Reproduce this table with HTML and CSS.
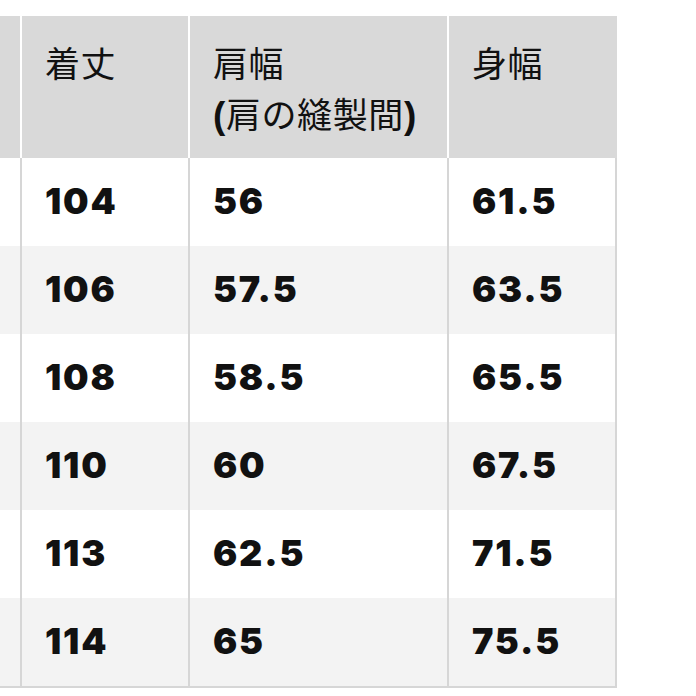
FILE: index.html
```html
<!DOCTYPE html>
<html lang="ja">
<head>
<meta charset="utf-8">
<link rel="stylesheet" href="styles.css">
</head>
<body>
<div class="sheet">
  <div class="row head">
    <div class="cell"></div>
    <div class="cell">着丈</div>
    <div class="cell">肩幅<br><span class="par">(</span>肩の縫製間<span class="par">)</span></div>
    <div class="cell">身幅</div>
  </div>
  <div class="row">
    <div class="cell"></div><div class="cell">104</div><div class="cell">56</div><div class="cell">61.5</div>
  </div>
  <div class="row alt">
    <div class="cell"></div><div class="cell">106</div><div class="cell">57.5</div><div class="cell">63.5</div>
  </div>
  <div class="row">
    <div class="cell"></div><div class="cell">108</div><div class="cell">58.5</div><div class="cell">65.5</div>
  </div>
  <div class="row alt">
    <div class="cell"></div><div class="cell">110</div><div class="cell">60</div><div class="cell">67.5</div>
  </div>
  <div class="row">
    <div class="cell"></div><div class="cell">113</div><div class="cell">62.5</div><div class="cell">71.5</div>
  </div>
  <div class="row alt">
    <div class="cell"></div><div class="cell">114</div><div class="cell">65</div><div class="cell">75.5</div>
  </div>
</div>
</body>
</html>
```
FILE: styles.css
```css
html, body {
  margin: 0;
  padding: 0;
  background: #ffffff;
  overflow: hidden;
}
body {
  font-family: "Noto Sans CJK JP", "Liberation Sans", sans-serif;
  color: #111111;
}
.sheet {
  margin-top: 16px;
  margin-left: -130px;
  width: 747px;
  border-bottom: 2px solid #d6d6d6;
}
.row {
  display: grid;
  grid-template-columns: 150px 168px 259px 170px;
  height: 88px;
  background: #ffffff;
}
.row.alt {
  background: #f3f3f3;
}
.row.head {
  height: 142px;
  background: #d9d9d9;
}
.cell {
  box-sizing: border-box;
  border-left: 2px solid #d6d6d6;
  padding-left: 23px;
  padding-bottom: 2px;
  display: flex;
  align-items: center;
  font-family: Inter, "Liberation Sans", sans-serif;
  font-weight: 900;
  font-size: 36px;
  letter-spacing: 1.8px;
  color: #111111;
}
.cell:first-child {
  border-left: none;
}
.cell:last-child {
  border-right: 2px solid #d6d6d6;
}
.head .cell {
  display: block;
  border-left-color: #ffffff;
  padding-top: 20px;
  padding-bottom: 0;
  font-family: "Noto Sans CJK JP", sans-serif;
  font-weight: 400;
  font-size: 35px;
  line-height: 51px;
  letter-spacing: 0.6px;
}
.head .cell:first-child {
  border-left: none;
}
.head .cell:last-child {
  border-right: 2px solid #d9d9d9;
}
.par {
  font-family: "Liberation Sans", sans-serif;
  font-weight: bold;
  font-size: 37px;
}
```
